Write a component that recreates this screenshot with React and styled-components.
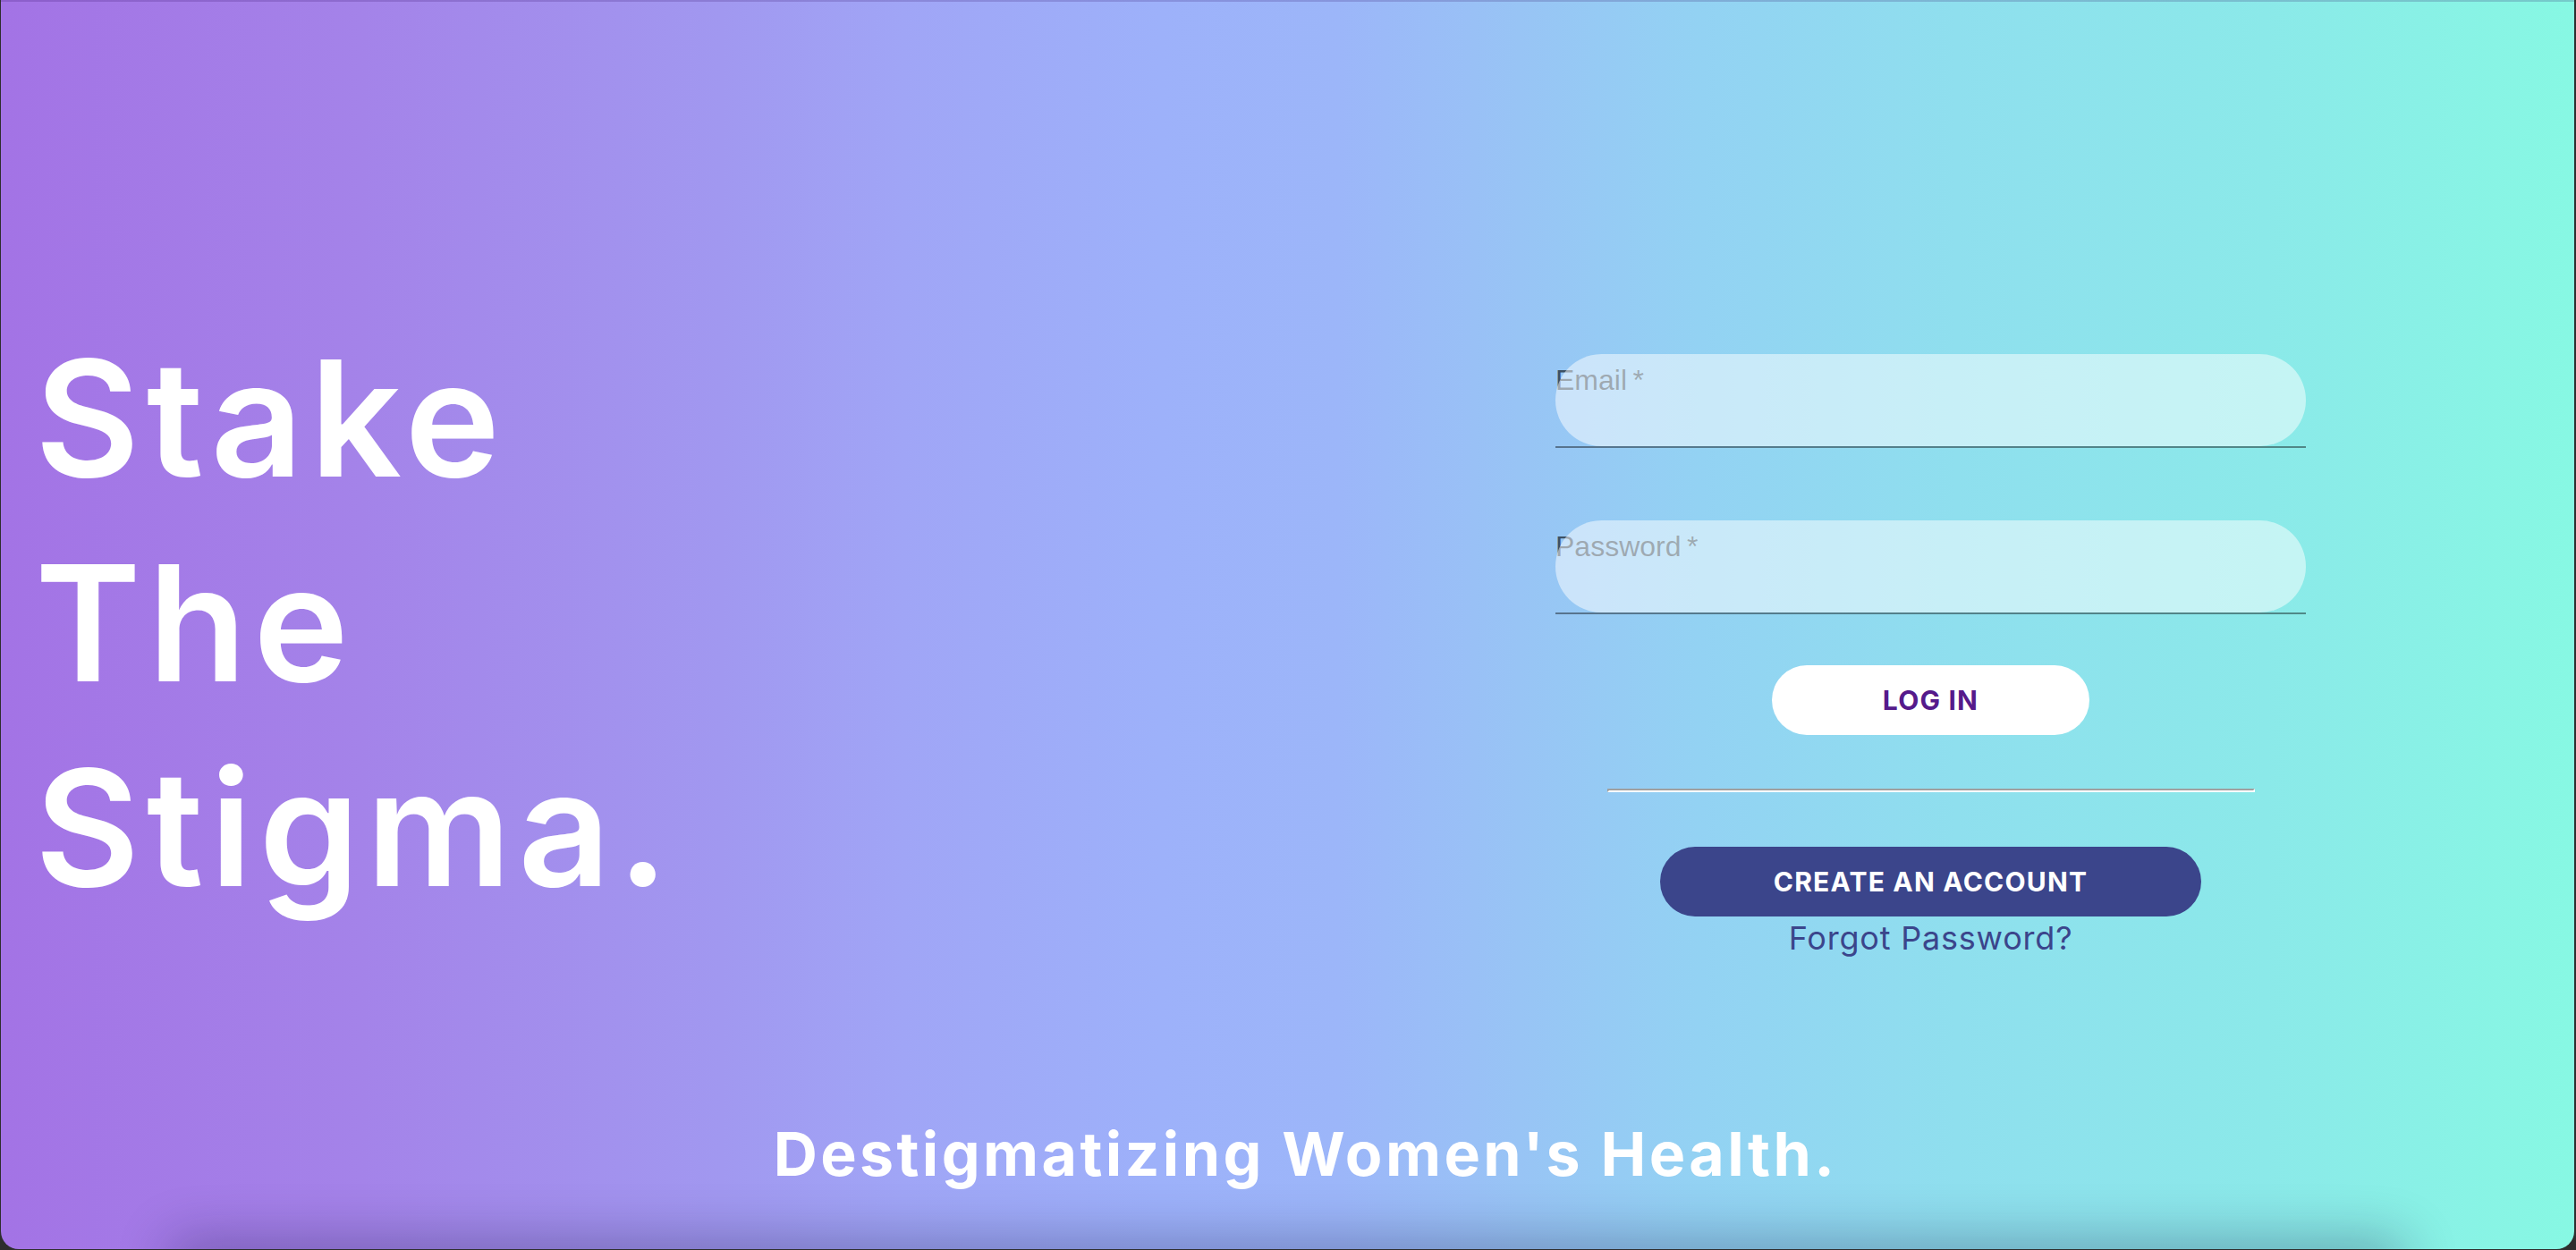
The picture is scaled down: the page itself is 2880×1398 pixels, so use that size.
import React from "react";
import styled, { createGlobalStyle } from "styled-components";

const Global = createGlobalStyle`
  html, body {
    margin: 0;
    padding: 0;
    background: #2e2e2e;
  }
  * { box-sizing: border-box; }
`;

const Window = styled.div`
  position: relative;
  margin: 0 2px 1px 1px;
  height: 1397px;
  border-radius: 0 0 20px 20px;
  overflow: hidden;
  display: flex;
  flex-direction: column;
  background: linear-gradient(
    to right,
    #a373e5 0%,
    #a483e9 14%,
    #a198f0 28%,
    #a0a5f6 35%,
    #9db1fa 45%,
    #9cb6f9 52%,
    #98c4f5 59%,
    #93d2f3 66%,
    #8fdfee 76%,
    #8be9e9 88%,
    #87f8e3 100%
  );
  box-shadow: inset 0 2px 0 rgba(40, 0, 90, 0.18);
  font-family: Inter, "Liberation Sans", sans-serif;

  &::after {
    content: "";
    position: absolute;
    left: 7%;
    right: 7%;
    bottom: -40px;
    height: 40px;
    box-shadow: 0 0 60px 10px rgba(20, 20, 60, 0.32);
    pointer-events: none;
  }
`;

const Main = styled.div`
  flex: 1;
  display: flex;
  align-items: flex-start;
`;

const Hero = styled.h1`
  margin: 0;
  padding: 353px 0 0 38px;
  font-family: Inter, "Liberation Sans", sans-serif;
  font-weight: 600;
  font-size: 180px;
  line-height: 229px;
  letter-spacing: 0.042em;
  color: #ffffff;
`;

const HeroLine = styled.span`
  display: block;
`;

const FormColumn = styled.form`
  margin-left: auto;
  margin-right: 300px;
  padding-top: 396px;
  width: 839px;
  display: flex;
  flex-direction: column;
  align-items: center;
`;

const Field = styled.div`
  position: relative;
  width: 100%;
  height: 105px;
  margin-bottom: ${(p) => p.$gap || 0}px;
  border-bottom: 2px solid rgba(0, 0, 0, 0.42);

  &::after {
    content: "";
    position: absolute;
    inset: 0;
    border-radius: 52px;
    background: rgba(255, 255, 255, 0.5);
  }
`;

const Label = styled.label`
  display: block;
  padding-top: 13px;
  font-family: "Liberation Sans", Arial, sans-serif;
  font-size: 32px;
  line-height: 32px;
  color: rgba(0, 0, 0, 0.6);
`;

const PillButton = styled.a`
  display: flex;
  align-items: center;
  justify-content: center;
  width: ${(p) => p.$width}px;
  height: 78px;
  border-radius: 39px;
  background: ${(p) => (p.$dark ? "#3b458b" : "#ffffff")};
  color: ${(p) => (p.$dark ? "#ffffff" : "#551a8b")};
  font-family: Inter, "Liberation Sans", sans-serif;
  font-weight: 700;
  font-size: 30px;
  letter-spacing: 1.2px;
  text-decoration: none;
  text-transform: uppercase;
`;

const Divider = styled.hr`
  width: 724px;
  height: 0;
  margin: 60px 0 61px;
  border-style: solid;
  border-width: 2px;
  border-color: #a0a0a0 #ffffff #ffffff #a0a0a0;
`;

const Forgot = styled.a`
  margin-top: 4px;
  font-family: Inter, "Liberation Sans", sans-serif;
  font-size: 36px;
  line-height: 40px;
  letter-spacing: 0.8px;
  color: #3b458b;
  text-decoration: none;
`;

const Tagline = styled.h2`
  margin: 0;
  padding: 0 0 67px 40px;
  text-align: center;
  font-family: Inter, "Liberation Sans", sans-serif;
  font-weight: 700;
  font-size: 68px;
  line-height: 80px;
  letter-spacing: 0.05em;
  color: #ffffff;
`;

export default function App() {
  return (
    <>
      <Global />
      <Window>
        <Main>
          <Hero>
            <HeroLine>Stake</HeroLine>
            <HeroLine>The</HeroLine>
            <HeroLine>Stigma.</HeroLine>
          </Hero>
          <FormColumn onSubmit={(e) => e.preventDefault()}>
            <Field $gap={81}>
              <Label>Email{"\u2009"}*</Label>
            </Field>
            <Field $gap={57}>
              <Label>Password{"\u2009"}*</Label>
            </Field>
            <PillButton $width={355}>Log In</PillButton>
            <Divider />
            <PillButton $dark $width={605}>Create an Account</PillButton>
            <Forgot>Forgot Password?</Forgot>
          </FormColumn>
        </Main>
        <Tagline>Destigmatizing Women's Health.</Tagline>
      </Window>
    </>
  );
}
